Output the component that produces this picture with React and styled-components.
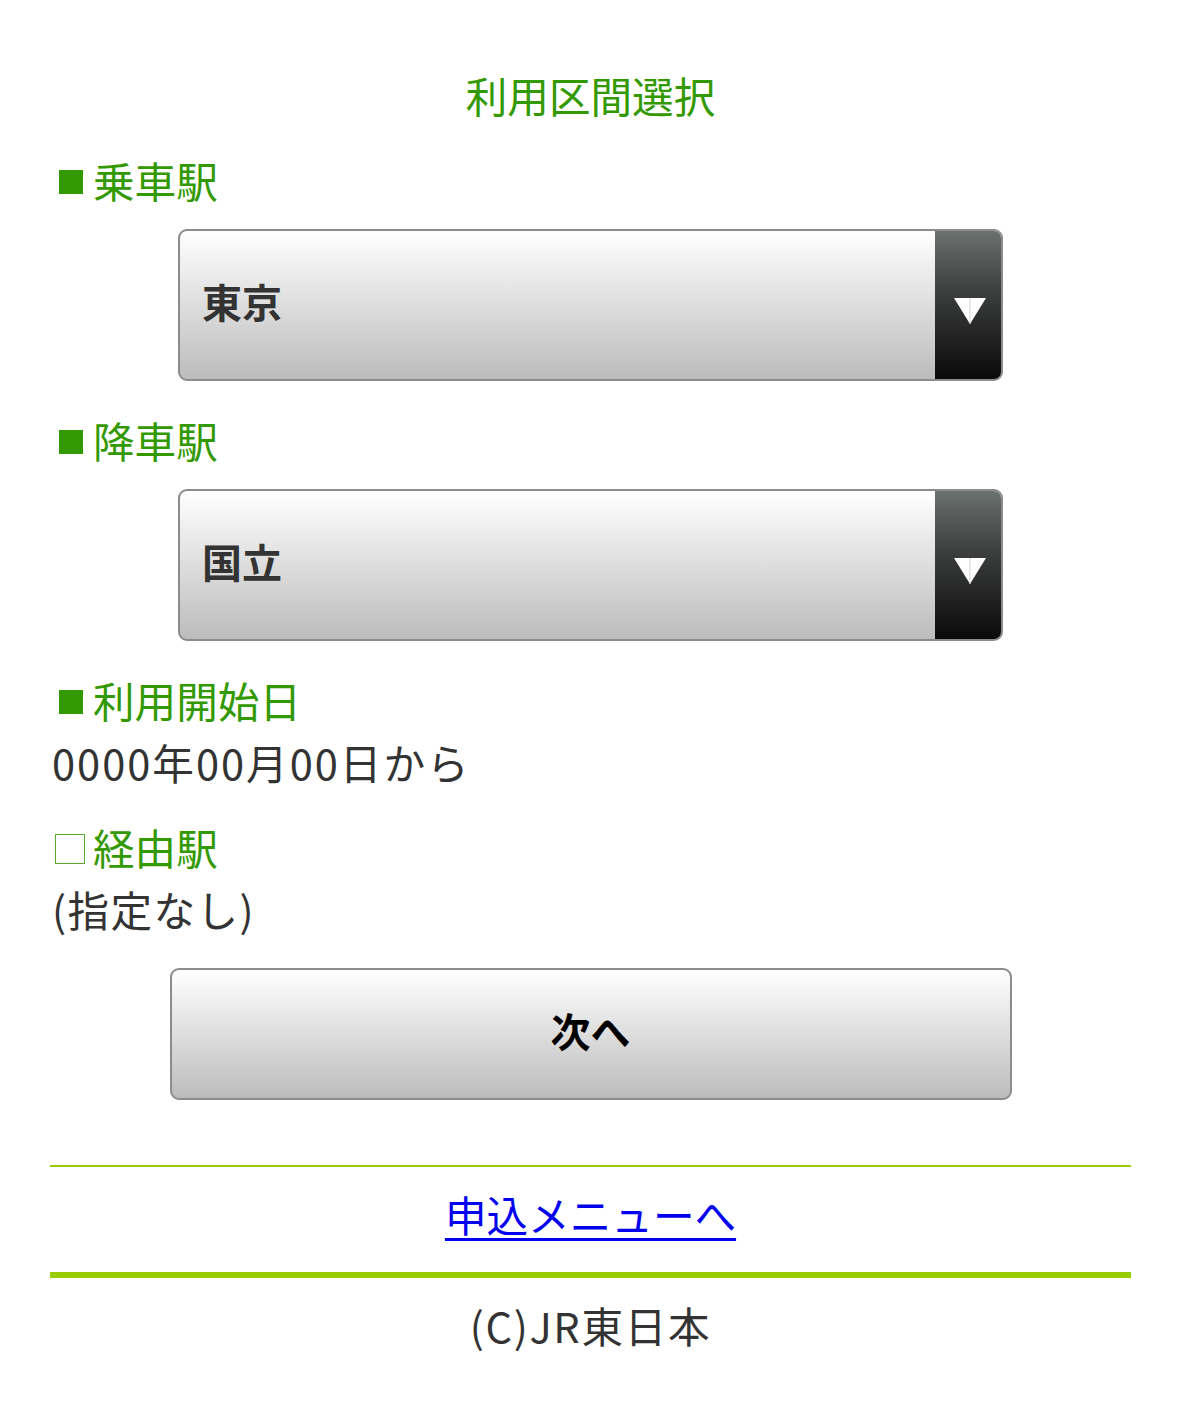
import React from "react";
import styled, { createGlobalStyle } from "styled-components";

const Global = createGlobalStyle`
  html, body { margin: 0; padding: 0; background: #fff; }
  body {
    font-family: "Noto Sans CJK JP", "Noto Sans", sans-serif;
    font-size: 41.6px;
    line-height: 62px;
    color: #333;
  }
`;

const Page = styled.div`
  width: 1081px;
  margin: 0 auto;
  padding: 64px 0 72px;
  display: flex;
  flex-direction: column;
`;

const Title = styled.h1`
  margin: 0 0 23px;
  font-size: 41.6px;
  font-weight: normal;
  line-height: 62px;
  text-align: center;
  color: #339900;
`;

const Label = styled.div`
  display: flex;
  align-items: center;
  color: #339900;
  line-height: 62px;
  margin-top: ${(p) => p.$top || 0}px;
`;

const Mark = styled.span`
  display: inline-block;
  box-sizing: border-box;
  width: 24px;
  height: 24px;
  margin: 3px 10px 0 9px;
  background: ${(p) => (p.$filled ? "#339900" : "transparent")};
  border: 2px solid #339900;
  ${(p) => !p.$filled && "border-color: #5aa830; border-width: 1.5px; width: 30px; height: 30px; margin: 3px 8px 0 5px;"}
`;

const Value = styled.div`
  color: #333;
  line-height: 62px;
  padding-left: 2px;
  letter-spacing: ${(p) => p.$ls || 0}px;
`;

const SelectBox = styled.div`
  box-sizing: border-box;
  align-self: center;
  width: 825px;
  height: 152px;
  margin-top: ${(p) => p.$top || 18}px;
  border: 2px solid #8c8c8c;
  border-radius: 9px;
  overflow: hidden;
  display: flex;
  background: linear-gradient(#ffffff, #bcbcbc);
`;

const SelectText = styled.div`
  flex: 1;
  display: flex;
  align-items: center;
  padding: 0 0 9px 22px;
  font-weight: bold;
  color: #333;
  font-size: 40px;
`;

const Arrow = styled.div`
  width: 66px;
  display: flex;
  align-items: center;
  justify-content: center;
  padding: 11px 0 0 3px;
  box-sizing: border-box;
  background: linear-gradient(#6b716e, #3d403e 40%, #0a0a0a);
`;

const Button = styled.button`
  box-sizing: border-box;
  align-self: center;
  width: 842px;
  height: 132px;
  margin-top: 28px;
  padding: 0 0 8px;
  border: 2px solid #8c8c8c;
  border-radius: 9px;
  background: linear-gradient(#ffffff, #bcbcbc);
  font-family: inherit;
  font-size: 40px;
  font-weight: bold;
  color: #000;
  cursor: pointer;
`;

const Rule = styled.hr`
  width: 100%;
  margin: ${(p) => p.$mt}px 0 0;
  border: none;
  height: ${(p) => p.$h}px;
  background: #99cc00;
`;

const LinkRow = styled.div`
  margin-top: 16px;
  text-align: center;
  line-height: 62px;
`;

const Link = styled.a`
  color: #0000ee;
  text-decoration: underline;
  text-decoration-thickness: 3px;
  text-underline-offset: 6px;
`;

const Footer = styled.div`
  margin-top: 16px;
  text-align: center;
  color: #333;
  line-height: 62px;
  letter-spacing: 1.7px;
`;

const Triangle = () => (
  <svg width="34" height="28" viewBox="0 0 34 28">
    <polygon points="1,1 33,1 17,27" fill="#fff" />
    <line x1="17" y1="1" x2="17" y2="27" stroke="#cfcfcf" strokeWidth="1" />
  </svg>
);

const Select = ({ value, top }) => (
  <SelectBox $top={top}>
    <SelectText>{value}</SelectText>
    <Arrow>
      <Triangle />
    </Arrow>
  </SelectBox>
);

export default function App() {
  return (
    <>
      <Global />
      <Page>
        <Title>利用区間選択</Title>
        <Label>
          <Mark $filled />
          乗車駅
        </Label>
        <Select value="東京" />
        <Label $top={28}>
          <Mark $filled />
          降車駅
        </Label>
        <Select value="国立" />
        <Label $top={28}>
          <Mark $filled />
          利用開始日
        </Label>
        <Value $ls={2}>0000年00月00日から</Value>
        <Label $top={23}>
          <Mark />
          経由駅
        </Label>
        <Value $ls={1.4}>(指定なし)</Value>
        <Button>次へ</Button>
        <Rule $mt={65} $h={2} />
        <LinkRow>
          <Link href="#">申込メニューへ</Link>
        </LinkRow>
        <Rule $mt={27} $h={6} />
        <Footer>(C)JR東日本</Footer>
      </Page>
    </>
  );
}
